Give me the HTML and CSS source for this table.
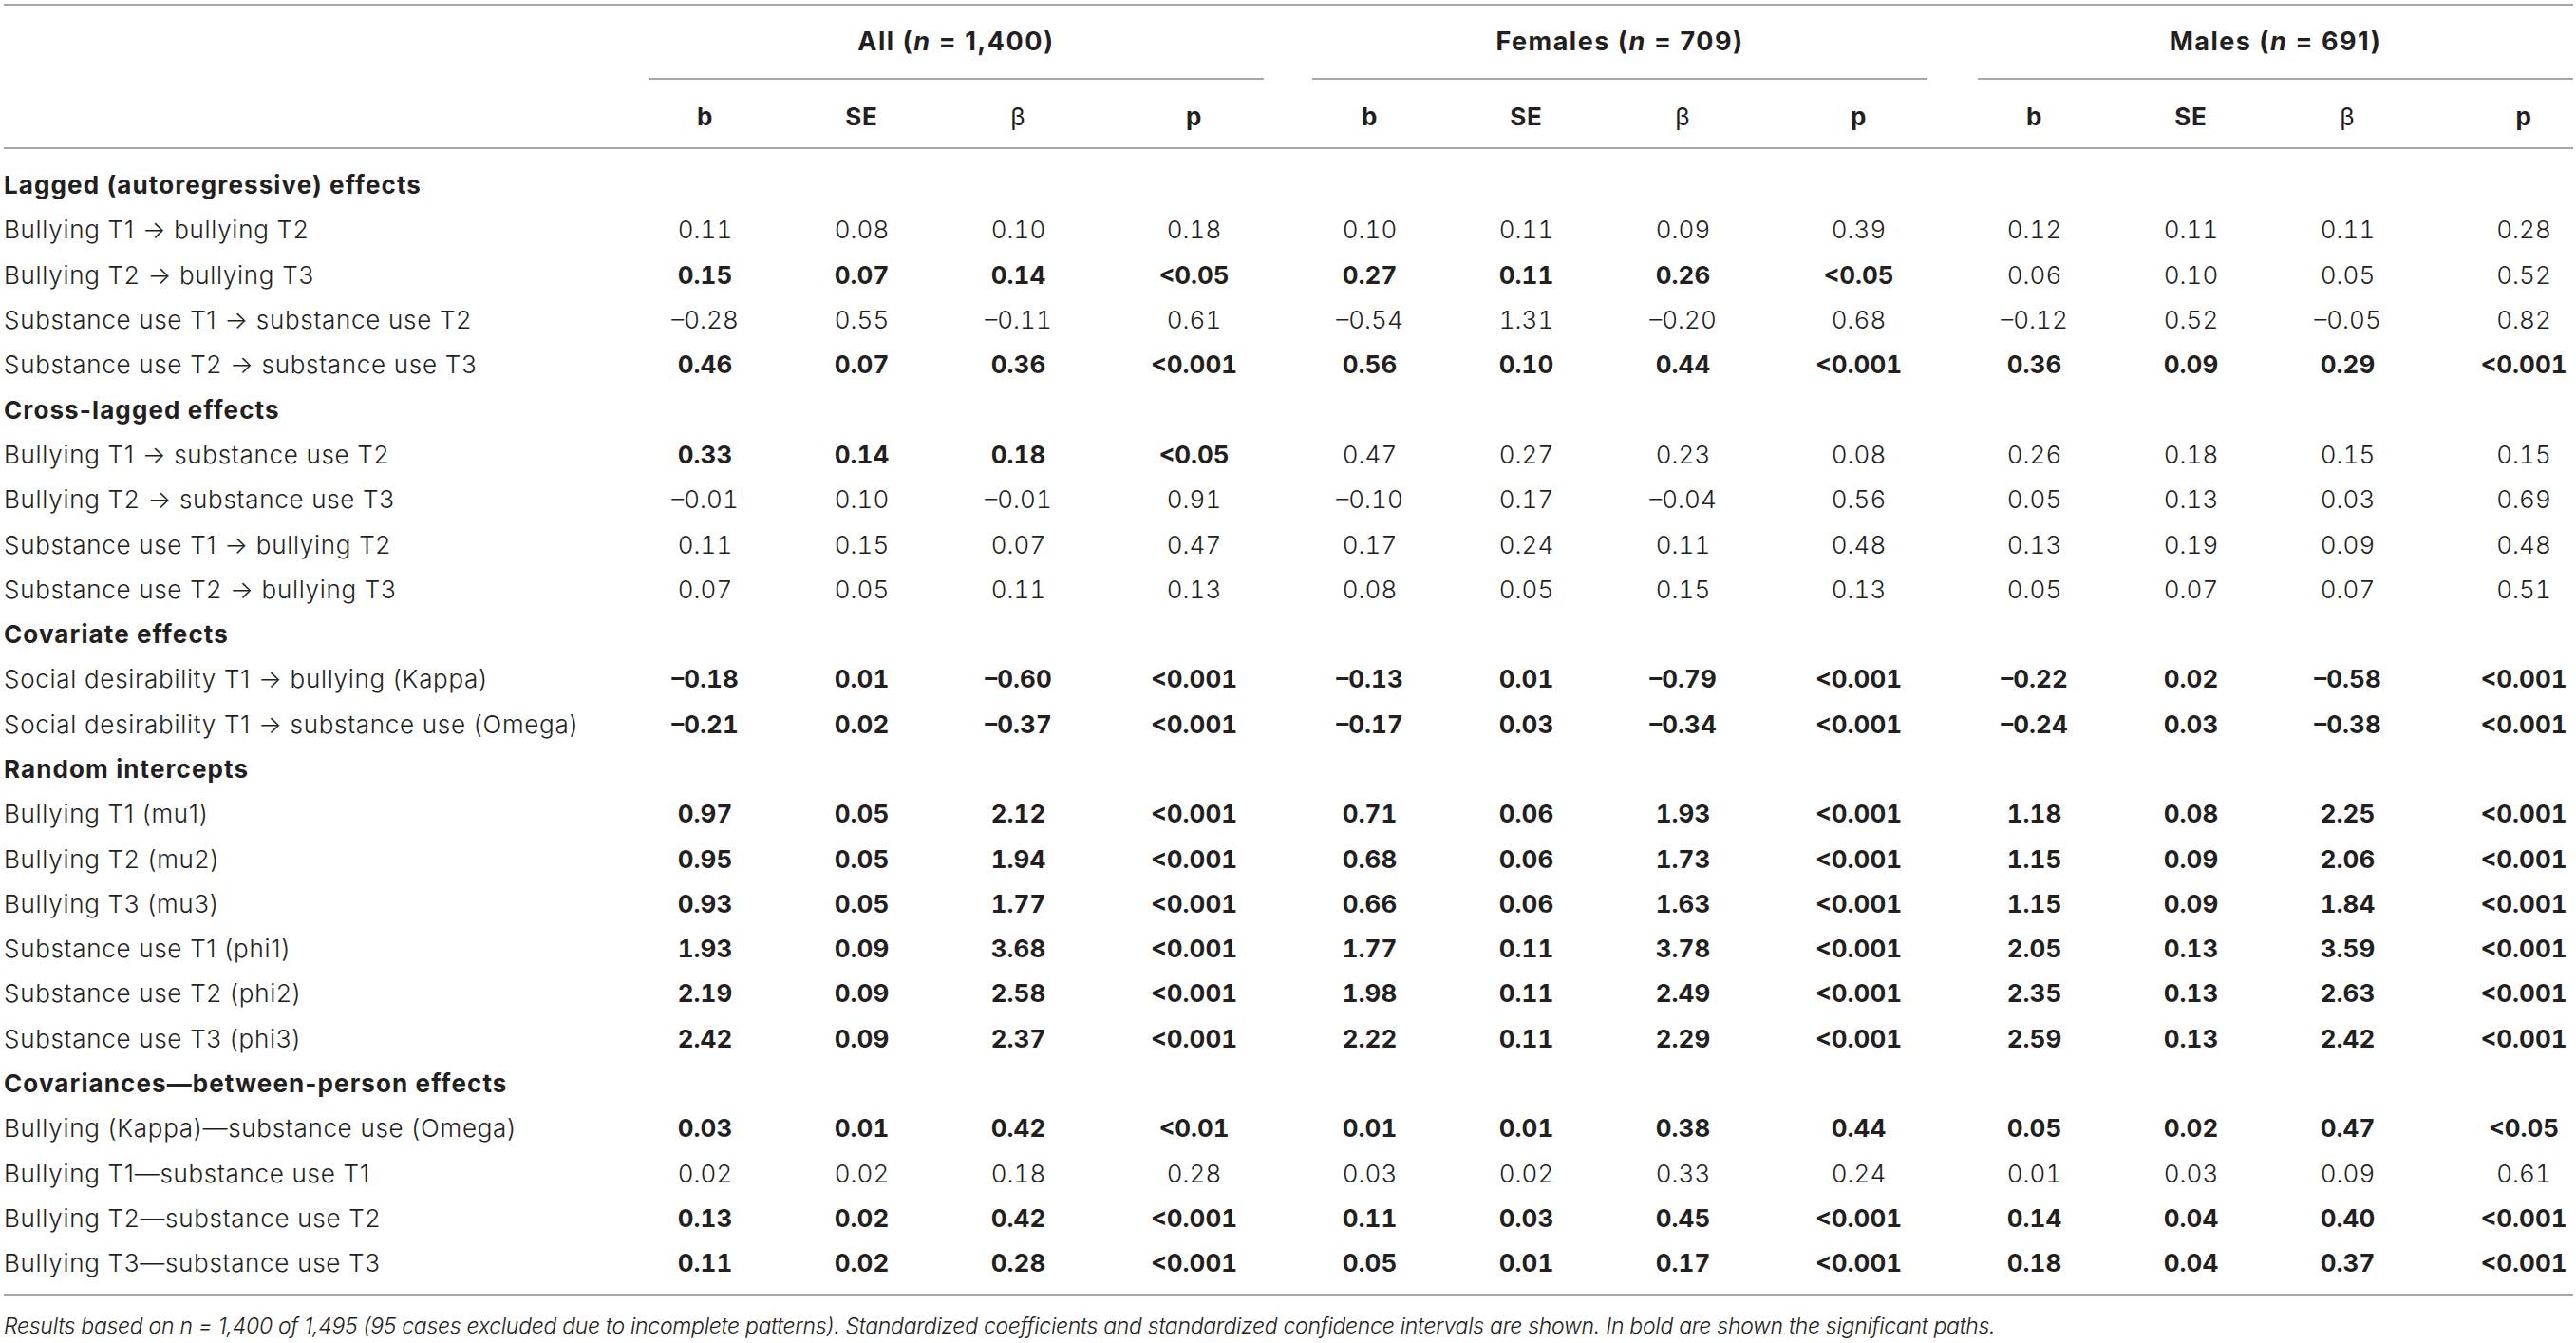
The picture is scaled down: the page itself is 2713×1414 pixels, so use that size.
FILE: index.html
```html
<!DOCTYPE html>
<html lang="en">
<head>
<meta charset="utf-8">
<title>Table</title>
<link rel="stylesheet" href="styles.css">
</head>
<body>
<div class="wrap">
<div class="tbl">
  <div class="row hrow1">
    <div class="cell"></div>
    <div class="grp g1"><span>All (<i>n</i> = 1,400)</span></div>
    <div class="grp g2"><span>Females (<i>n</i> = 709)</span></div>
    <div class="grp g3"><span>Males (<i>n</i> = 691)</span></div>
  </div>
  <div class="row hrow2">
    <div class="cell"></div>
    <div class="cell">b</div><div class="cell">SE</div><div class="cell beta">β</div><div class="cell">p</div>
    <div class="cell">b</div><div class="cell">SE</div><div class="cell beta">β</div><div class="cell">p</div>
    <div class="cell">b</div><div class="cell">SE</div><div class="cell beta">β</div><div class="cell plast">p</div>
  </div>
  <div class="tbody">
    <div class="row sec"><div class="lbl">Lagged (autoregressive) effects</div></div>
    <div class="row"><div class="lbl">Bullying T1 → bullying T2</div><div class="cell">0.11</div><div class="cell">0.08</div><div class="cell">0.10</div><div class="cell">0.18</div><div class="cell">0.10</div><div class="cell">0.11</div><div class="cell">0.09</div><div class="cell">0.39</div><div class="cell">0.12</div><div class="cell">0.11</div><div class="cell">0.11</div><div class="cell plast">0.28</div></div>
    <div class="row"><div class="lbl">Bullying T2 → bullying T3</div><div class="cell s">0.15</div><div class="cell s">0.07</div><div class="cell s">0.14</div><div class="cell s">&lt;0.05</div><div class="cell s">0.27</div><div class="cell s">0.11</div><div class="cell s">0.26</div><div class="cell s">&lt;0.05</div><div class="cell">0.06</div><div class="cell">0.10</div><div class="cell">0.05</div><div class="cell plast">0.52</div></div>
    <div class="row"><div class="lbl">Substance use T1 → substance use T2</div><div class="cell">–0.28</div><div class="cell">0.55</div><div class="cell">–0.11</div><div class="cell">0.61</div><div class="cell">–0.54</div><div class="cell">1.31</div><div class="cell">–0.20</div><div class="cell">0.68</div><div class="cell">–0.12</div><div class="cell">0.52</div><div class="cell">–0.05</div><div class="cell plast">0.82</div></div>
    <div class="row sig"><div class="lbl">Substance use T2 → substance use T3</div><div class="cell">0.46</div><div class="cell">0.07</div><div class="cell">0.36</div><div class="cell">&lt;0.001</div><div class="cell">0.56</div><div class="cell">0.10</div><div class="cell">0.44</div><div class="cell">&lt;0.001</div><div class="cell">0.36</div><div class="cell">0.09</div><div class="cell">0.29</div><div class="cell plast">&lt;0.001</div></div>
    <div class="row sec"><div class="lbl">Cross-lagged effects</div></div>
    <div class="row"><div class="lbl">Bullying T1 → substance use T2</div><div class="cell s">0.33</div><div class="cell s">0.14</div><div class="cell s">0.18</div><div class="cell s">&lt;0.05</div><div class="cell">0.47</div><div class="cell">0.27</div><div class="cell">0.23</div><div class="cell">0.08</div><div class="cell">0.26</div><div class="cell">0.18</div><div class="cell">0.15</div><div class="cell plast">0.15</div></div>
    <div class="row"><div class="lbl">Bullying T2 → substance use T3</div><div class="cell">–0.01</div><div class="cell">0.10</div><div class="cell">–0.01</div><div class="cell">0.91</div><div class="cell">–0.10</div><div class="cell">0.17</div><div class="cell">–0.04</div><div class="cell">0.56</div><div class="cell">0.05</div><div class="cell">0.13</div><div class="cell">0.03</div><div class="cell plast">0.69</div></div>
    <div class="row"><div class="lbl">Substance use T1 → bullying T2</div><div class="cell">0.11</div><div class="cell">0.15</div><div class="cell">0.07</div><div class="cell">0.47</div><div class="cell">0.17</div><div class="cell">0.24</div><div class="cell">0.11</div><div class="cell">0.48</div><div class="cell">0.13</div><div class="cell">0.19</div><div class="cell">0.09</div><div class="cell plast">0.48</div></div>
    <div class="row"><div class="lbl">Substance use T2 → bullying T3</div><div class="cell">0.07</div><div class="cell">0.05</div><div class="cell">0.11</div><div class="cell">0.13</div><div class="cell">0.08</div><div class="cell">0.05</div><div class="cell">0.15</div><div class="cell">0.13</div><div class="cell">0.05</div><div class="cell">0.07</div><div class="cell">0.07</div><div class="cell plast">0.51</div></div>
    <div class="row sec"><div class="lbl">Covariate effects</div></div>
    <div class="row sig"><div class="lbl">Social desirability T1 → bullying (Kappa)</div><div class="cell">–0.18</div><div class="cell">0.01</div><div class="cell">–0.60</div><div class="cell">&lt;0.001</div><div class="cell">–0.13</div><div class="cell">0.01</div><div class="cell">–0.79</div><div class="cell">&lt;0.001</div><div class="cell">–0.22</div><div class="cell">0.02</div><div class="cell">–0.58</div><div class="cell plast">&lt;0.001</div></div>
    <div class="row sig"><div class="lbl">Social desirability T1 → substance use (Omega)</div><div class="cell">–0.21</div><div class="cell">0.02</div><div class="cell">–0.37</div><div class="cell">&lt;0.001</div><div class="cell">–0.17</div><div class="cell">0.03</div><div class="cell">–0.34</div><div class="cell">&lt;0.001</div><div class="cell">–0.24</div><div class="cell">0.03</div><div class="cell">–0.38</div><div class="cell plast">&lt;0.001</div></div>
    <div class="row sec"><div class="lbl">Random intercepts</div></div>
    <div class="row sig"><div class="lbl">Bullying T1 (mu1)</div><div class="cell">0.97</div><div class="cell">0.05</div><div class="cell">2.12</div><div class="cell">&lt;0.001</div><div class="cell">0.71</div><div class="cell">0.06</div><div class="cell">1.93</div><div class="cell">&lt;0.001</div><div class="cell">1.18</div><div class="cell">0.08</div><div class="cell">2.25</div><div class="cell plast">&lt;0.001</div></div>
    <div class="row sig"><div class="lbl">Bullying T2 (mu2)</div><div class="cell">0.95</div><div class="cell">0.05</div><div class="cell">1.94</div><div class="cell">&lt;0.001</div><div class="cell">0.68</div><div class="cell">0.06</div><div class="cell">1.73</div><div class="cell">&lt;0.001</div><div class="cell">1.15</div><div class="cell">0.09</div><div class="cell">2.06</div><div class="cell plast">&lt;0.001</div></div>
    <div class="row sig"><div class="lbl">Bullying T3 (mu3)</div><div class="cell">0.93</div><div class="cell">0.05</div><div class="cell">1.77</div><div class="cell">&lt;0.001</div><div class="cell">0.66</div><div class="cell">0.06</div><div class="cell">1.63</div><div class="cell">&lt;0.001</div><div class="cell">1.15</div><div class="cell">0.09</div><div class="cell">1.84</div><div class="cell plast">&lt;0.001</div></div>
    <div class="row sig"><div class="lbl">Substance use T1 (phi1)</div><div class="cell">1.93</div><div class="cell">0.09</div><div class="cell">3.68</div><div class="cell">&lt;0.001</div><div class="cell">1.77</div><div class="cell">0.11</div><div class="cell">3.78</div><div class="cell">&lt;0.001</div><div class="cell">2.05</div><div class="cell">0.13</div><div class="cell">3.59</div><div class="cell plast">&lt;0.001</div></div>
    <div class="row sig"><div class="lbl">Substance use T2 (phi2)</div><div class="cell">2.19</div><div class="cell">0.09</div><div class="cell">2.58</div><div class="cell">&lt;0.001</div><div class="cell">1.98</div><div class="cell">0.11</div><div class="cell">2.49</div><div class="cell">&lt;0.001</div><div class="cell">2.35</div><div class="cell">0.13</div><div class="cell">2.63</div><div class="cell plast">&lt;0.001</div></div>
    <div class="row sig"><div class="lbl">Substance use T3 (phi3)</div><div class="cell">2.42</div><div class="cell">0.09</div><div class="cell">2.37</div><div class="cell">&lt;0.001</div><div class="cell">2.22</div><div class="cell">0.11</div><div class="cell">2.29</div><div class="cell">&lt;0.001</div><div class="cell">2.59</div><div class="cell">0.13</div><div class="cell">2.42</div><div class="cell plast">&lt;0.001</div></div>
    <div class="row sec"><div class="lbl">Covariances—between-person effects</div></div>
    <div class="row sig"><div class="lbl">Bullying (Kappa)—substance use (Omega)</div><div class="cell">0.03</div><div class="cell">0.01</div><div class="cell">0.42</div><div class="cell">&lt;0.01</div><div class="cell">0.01</div><div class="cell">0.01</div><div class="cell">0.38</div><div class="cell">0.44</div><div class="cell">0.05</div><div class="cell">0.02</div><div class="cell">0.47</div><div class="cell plast">&lt;0.05</div></div>
    <div class="row"><div class="lbl">Bullying T1—substance use T1</div><div class="cell">0.02</div><div class="cell">0.02</div><div class="cell">0.18</div><div class="cell">0.28</div><div class="cell">0.03</div><div class="cell">0.02</div><div class="cell">0.33</div><div class="cell">0.24</div><div class="cell">0.01</div><div class="cell">0.03</div><div class="cell">0.09</div><div class="cell plast">0.61</div></div>
    <div class="row sig"><div class="lbl">Bullying T2—substance use T2</div><div class="cell">0.13</div><div class="cell">0.02</div><div class="cell">0.42</div><div class="cell">&lt;0.001</div><div class="cell">0.11</div><div class="cell">0.03</div><div class="cell">0.45</div><div class="cell">&lt;0.001</div><div class="cell">0.14</div><div class="cell">0.04</div><div class="cell">0.40</div><div class="cell plast">&lt;0.001</div></div>
    <div class="row sig"><div class="lbl">Bullying T3—substance use T3</div><div class="cell">0.11</div><div class="cell">0.02</div><div class="cell">0.28</div><div class="cell">&lt;0.001</div><div class="cell">0.05</div><div class="cell">0.01</div><div class="cell">0.17</div><div class="cell">&lt;0.001</div><div class="cell">0.18</div><div class="cell">0.04</div><div class="cell">0.37</div><div class="cell plast">&lt;0.001</div></div>
  </div>
</div>
<p class="note">Results based on <i>n</i> = 1,400 of 1,495 (95 cases excluded due to incomplete patterns). Standardized coefficients and standardized confidence intervals are shown. In bold are shown the significant paths.</p>
</div>
</body>
</html>
```
FILE: styles.css
```css
html, body {
  margin: 0;
  padding: 0;
  background: #ffffff;
}
body {
  font-family: Inter, Roboto, "Liberation Sans", sans-serif;
  font-weight: 300;
  color: #231f20;
}
.wrap {
  margin: 4px 0 0 4px;
  width: 2706px;
}
.tbl {
  width: 2706px;
  border-top: 2px solid #a6a6a6;
  border-bottom: 2px solid #a6a6a6;
  font-size: 26px;
}
.row {
  display: grid;
  grid-template-columns: 656px 165px 165px 165px 205px 165px 165px 165px 205px 165px 165px 165px 155px;
  align-items: center;
  white-space: nowrap;
}
.cell {
  text-align: center;
  font-variant-numeric: tabular-nums;
}
.plast { padding-left: 51px; }

/* header rows */
.hrow1 { height: 78px; align-items: stretch; }
.grp {
  grid-column: span 4;
  border-bottom: 2px solid #a6a6a6;
  text-align: center;
  font-weight: 700;
  font-size: 27px;
  letter-spacing: 1.5px;
  line-height: 76px;
}
.g1 { margin: 0 29px 0 23px; }
.g2 { margin: 0 30px 0 22px; }
.g3 { margin: 0 0 0 23px; }

.hrow2 {
  height: 73px;
  box-sizing: border-box;
  padding-top: 5px;
  border-bottom: 2px solid #a6a6a6;
  font-weight: 700;
}
.hrow2 .cell { letter-spacing: 0.8px; }
.hrow2 .beta { font-weight: 400; }

/* body */
.tbody { padding: 14px 0 9px 0; }
.tbody .row { height: 47.3px; }
.lbl {
  letter-spacing: 0.7px;
}
.sec .lbl {
  grid-column: 1 / -1;
  font-weight: 700;
  letter-spacing: 1.1px;
}
.s, .sig .cell { font-weight: 700; }

.note {
  margin: 12px 0 0 0;
  line-height: 40px;
  font-size: 23px;
  letter-spacing: -0.28px;
  font-style: italic;
}
```
